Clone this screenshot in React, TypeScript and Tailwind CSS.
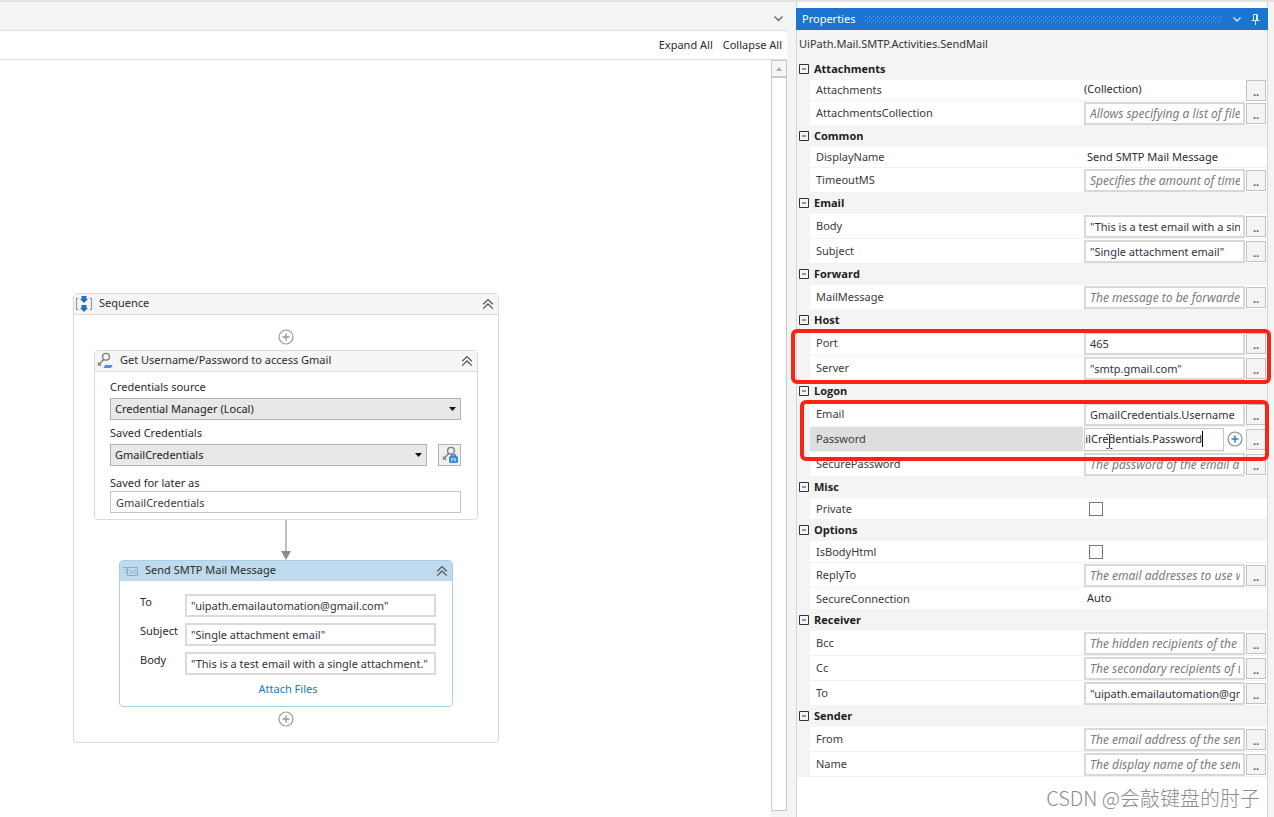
import type { ReactNode } from "react";

type Field =
  | { kind: "collection" | "text" | "option"; name: string; value: string }
  | { kind: "hint" | "expr"; name: string; value: string }
  | { kind: "check"; name: string }
  | { kind: "editing"; name: string; value: string };

type Group = { title: string; frame?: string; fields: Field[] };

const groups: Group[] = [
  {
    title: "Attachments",
    fields: [
      { kind: "collection", name: "Attachments", value: "(Collection)" },
      { kind: "hint", name: "AttachmentsCollection", value: "Allows specifying a list of files to be attached" },
    ],
  },
  {
    title: "Common",
    fields: [
      { kind: "text", name: "DisplayName", value: "Send SMTP Mail Message" },
      { kind: "hint", name: "TimeoutMS", value: "Specifies the amount of time to wait" },
    ],
  },
  {
    title: "Email",
    fields: [
      { kind: "expr", name: "Body", value: '"This is a test email with a single attachment."' },
      { kind: "expr", name: "Subject", value: '"Single attachment email"' },
    ],
  },
  {
    title: "Forward",
    fields: [{ kind: "hint", name: "MailMessage", value: "The message to be forwarded" }],
  },
  {
    title: "Host",
    frame: "-left-1.5 -right-1 top-[19px] -bottom-[3px]",
    fields: [
      { kind: "expr", name: "Port", value: "465" },
      { kind: "expr", name: "Server", value: '"smtp.gmail.com"' },
    ],
  },
  {
    title: "Logon",
    frame: "left-[3px] -right-0.5 top-[19px] bottom-4",
    fields: [
      { kind: "expr", name: "Email", value: "GmailCredentials.Username" },
      { kind: "editing", name: "Password", value: "GmailCredentials.Password" },
      { kind: "hint", name: "SecurePassword", value: "The password of the email account" },
    ],
  },
  { title: "Misc", fields: [{ kind: "check", name: "Private" }] },
  {
    title: "Options",
    fields: [
      { kind: "check", name: "IsBodyHtml" },
      { kind: "hint", name: "ReplyTo", value: "The email addresses to use when replying" },
      { kind: "option", name: "SecureConnection", value: "Auto" },
    ],
  },
  {
    title: "Receiver",
    fields: [
      { kind: "hint", name: "Bcc", value: "The hidden recipients of the email" },
      { kind: "hint", name: "Cc", value: "The secondary recipients of the email" },
      { kind: "expr", name: "To", value: '"uipath.emailautomation@gmail.com"' },
    ],
  },
  {
    title: "Sender",
    fields: [
      { kind: "hint", name: "From", value: "The email address of the sender" },
      { kind: "hint", name: "Name", value: "The display name of the sender" },
    ],
  },
];

function PlusCircle({ blue = false }: { blue?: boolean }) {
  return (
    <svg width="16" height="16" viewBox="0 0 16 16" fill="none" aria-hidden="true">
      <circle cx="8" cy="8" r="7" stroke={blue ? "#7d8a94" : "#999"} strokeWidth="1.2" />
      <path d="M8 4.5v7M4.5 8h7" stroke={blue ? "#2f7fc4" : "#999"} strokeWidth="1.5" />
    </svg>
  );
}

function DoubleChevron() {
  return (
    <svg width="12" height="12" viewBox="0 0 12 12" fill="none" stroke="#555" strokeWidth="1.3" aria-hidden="true">
      <path d="M1.2 6.2 6 1.6l4.8 4.6M1.2 10.6 6 6l4.8 4.6" />
    </svg>
  );
}

function SequenceIcon() {
  return (
    <svg width="18" height="16" viewBox="0 0 18 16" fill="none" aria-hidden="true">
      <path d="M3.5 2.5h-2v11h2M14.5 2.5h2v11h-2" stroke="#9a9a9a" strokeWidth="1.2" />
      <path d="M6.5 0h5v3h1.500L9 7 5 3h1.500zM6.500 9h5v3h1.500L9 16l-4-4h1.500z" fill="#2272c3" />
    </svg>
  );
}

function KeyIcon({ badge }: { badge: "bar" | "lock" }) {
  return (
    <svg width="18" height="18" viewBox="0 0 18 18" fill="none" aria-hidden="true">
      <circle cx="10" cy="4.800" r="3.400" stroke="#808080" strokeWidth="1.400" />
      <path d="M7.600 7.400 2 13.400M2 10.800l3 3" stroke="#808080" strokeWidth="1.500" />
      {badge === "bar" ? (
        <path d="M9 13h7.500l-1.500 3H7.500z" fill="#4a90dc" />
      ) : (
        <>
          <path d="M10.500 10.500V9h4v1.500" stroke="#3f86d4" strokeWidth="1.300" />
          <rect x="8" y="10" width="9" height="7" rx="1.500" fill="#3f86d4" />
          <path d="M10.500 15.500v-3h4v3M10.500 14h4" stroke="#a9cbee" />
        </>
      )}
    </svg>
  );
}

function MailIcon() {
  return (
    <svg width="18" height="12" viewBox="0 0 18 12" fill="none" stroke="#87a9d0" strokeWidth="1" aria-hidden="true">
      <path d="M6.500 2.500h10v8h-10zM8 4.500l3.500 3 3.500-3M8.500 9l1.500-1.500M15 9l-1.500-1.500M2 2.500h4M3.500 5h3M4.500 7.500h2" />
    </svg>
  );
}

function ActivityHeader({ icon, title, selected = false }: { icon: ReactNode; title: string; selected?: boolean }) {
  return (
    <header
      className={
        selected
          ? "flex h-5 items-center bg-[#bfdaed] pr-[3px]"
          : "flex h-[21px] items-center border-b border-[#dcdcdc] bg-[#f5f5f5] pr-[3px]"
      }
    >
      <span className="flex w-[25px] justify-start pl-px">{icon}</span>
      <h2 className="grow truncate pb-0.5">{title}</h2>
      <button type="button" aria-label={`Collapse ${title}`} className="p-px">
        <DoubleChevron />
      </button>
    </header>
  );
}

function SourceSelect({ id, value }: { id: string; value: string }) {
  return (
    <div className="relative grow">
      <select
        id={id}
        className="block h-[22px] w-full appearance-none border border-[#b3b3b3] bg-[#e8e8e8] px-1 leading-4 text-[#222] outline-none"
      >
        <option>{value}</option>
      </select>
      <svg width="7" height="4" viewBox="0 0 7 4" className="pointer-events-none absolute top-[9px] right-[5px]" aria-hidden="true">
        <path d="M0 0h7L3.500 4z" fill="#111" />
      </svg>
    </div>
  );
}

function CredentialsActivity() {
  return (
    <article className="w-full rounded-sm border border-[#d9d9d9] bg-white">
      <ActivityHeader icon={<KeyIcon badge="bar" />} title="Get Username/Password to access Gmail" />
      <div className="flex flex-col pt-[7px] pr-4 pb-1.5 pl-[15px]">
        <label htmlFor="source" className="mb-[3px] leading-4">
          Credentials source
        </label>
        <SourceSelect id="source" value="Credential Manager (Local)" />
        <label htmlFor="saved" className="mt-[5px] mb-[3px] leading-4">
          Saved Credentials
        </label>
        <div className="flex gap-[11px]">
          <SourceSelect id="saved" value="GmailCredentials" />
          <button
            type="button"
            aria-label="Add credentials"
            className="flex h-[22px] w-[23px] items-center justify-center border border-[#b5b5b5] bg-[#efefef]"
          >
            <KeyIcon badge="lock" />
          </button>
        </div>
        <label htmlFor="later" className="mt-[9px] leading-4">
          Saved for later as
        </label>
        <input
          id="later"
          defaultValue="GmailCredentials"
          className="h-[22px] border border-[#c4c4c4] bg-white px-[5px] text-[#3d3d4d] outline-none"
        />
      </div>
    </article>
  );
}

const mailFields = [
  { label: "To", value: '"uipath.emailautomation@gmail.com"' },
  { label: "Subject", value: '"Single attachment email"' },
  { label: "Body", value: '"This is a test email with a single attachment."' },
];

function MailActivity() {
  return (
    <article className="w-full max-w-[334px] rounded-sm border border-[#a9cfe8] bg-white">
      <ActivityHeader icon={<MailIcon />} title="Send SMTP Mail Message" selected />
      <div className="flex flex-col gap-[6px] pt-[13px] pr-4 pb-[9px] pl-5">
        {mailFields.map((f) => (
          <div key={f.label} className="flex">
            <label htmlFor={`mail-${f.label}`} className="w-[45px] leading-4">
              {f.label}
            </label>
            <input
              id={`mail-${f.label}`}
              defaultValue={f.value}
              className="h-[23px] min-w-0 grow border-2 border-[#dadade] bg-white px-1 text-[#33333f] outline-none"
            />
          </div>
        ))}
        <a href="#attach" className="self-center leading-4 text-[#2377bd]">
          Attach Files
        </a>
      </div>
    </article>
  );
}

function Designer() {
  return (
    <div className="flex grow items-start pt-[233px] pr-4 pl-[73px]">
      <section className="w-full max-w-[426px] rounded-sm border border-[#d9d9d9] bg-white">
        <ActivityHeader icon={<SequenceIcon />} title="Sequence" />
        <div className="flex flex-col items-center px-5 pt-[14px] pb-[15px]">
          <button type="button" aria-label="Add activity at start" className="mb-[5px]">
            <PlusCircle />
          </button>
          <CredentialsActivity />
          <svg width="10" height="40" viewBox="0 0 10 40" aria-hidden="true">
            <path d="M5 0v32" stroke="#aaa" strokeWidth="1.500" />
            <path d="M0 31h10L5 40z" fill="#8c8c8c" />
          </svg>
          <MailActivity />
          <button type="button" aria-label="Add activity at end" className="mt-1">
            <PlusCircle />
          </button>
        </div>
      </section>
    </div>
  );
}

function BrowseButton({ name }: { name: string }) {
  return (
    <button
      type="button"
      aria-label={`Browse ${name}`}
      className="flex h-[21px] w-5 shrink-0 items-end justify-center border border-[#c2c2c2] bg-[#f4f4f4] font-bold leading-4 text-[#555]"
    >
      ..
    </button>
  );
}

function FieldEditor({ field, id }: { field: Field; id: string }) {
  switch (field.kind) {
    case "collection":
      return (
        <>
          <input id={id} readOnly defaultValue={field.value} className="min-w-0 grow bg-transparent pb-0.5 outline-none" />
          <BrowseButton name={field.name} />
        </>
      );
    case "text":
      return <input id={id} defaultValue={field.value} className="min-w-0 grow bg-transparent pl-[3px] outline-none" />;
    case "option":
      return (
        <select id={id} className="min-w-0 grow appearance-none bg-transparent pl-[3px] outline-none">
          <option>{field.value}</option>
        </select>
      );
    case "check":
      return <input id={id} type="checkbox" className="ml-[5px] size-[14px] appearance-none border border-[#777] bg-white" />;
    case "editing":
      return (
        <>
          <div className="relative flex h-[23px] min-w-0 grow items-center justify-end overflow-hidden border border-[#c4c4c4] bg-white">
            <input id={id} defaultValue={field.value} className="w-44 shrink-0 bg-transparent text-right outline-none" />
            <span className="mr-5 h-4 w-px shrink-0 bg-black" />
            <svg width="7" height="15" viewBox="0 0 7 15" className="absolute top-[5px] left-[21px]" fill="none" stroke="#333" aria-hidden="true">
              <path d="M0.500 0.500h2l1 1 1-1h2M3.500 1.500v12M0.500 14.500h2l1-1 1 1h2" />
            </svg>
          </div>
          <button type="button" aria-label="Create variable" className="flex w-5 shrink-0 justify-center">
            <PlusCircle blue />
          </button>
          <BrowseButton name={field.name} />
        </>
      );
    case "expr":
      return (
        <>
          <input
            id={id}
            defaultValue={field.value}
            className="h-[23px] min-w-0 grow border-2 border-[#d8d8d8] bg-white pr-[3px] pl-1 text-[#33333f] outline-none"
          />
          <BrowseButton name={field.name} />
        </>
      );
    case "hint":
      return (
        <>
          <input
            id={id}
            placeholder={field.value}
            className="h-[23px] min-w-0 grow border-2 border-[#d8d8d8] bg-white pr-[3px] pl-1 text-[12px] italic outline-none placeholder:text-[#7a7a7a]"
          />
          <BrowseButton name={field.name} />
        </>
      );
  }
}

const rowHeight: Record<Field["kind"], string> = {
  collection: "h-[21px]",
  text: "h-[21px]",
  option: "h-[22px]",
  check: "h-[22px]",
  editing: "h-[25px]",
  expr: "h-[25px]",
  hint: "h-[25px]",
};

function PropertyGroup({ group }: { group: Group }) {
  return (
    <section className="relative bg-[#f4f4f4]">
      <h3 className="flex h-[21px] items-center gap-[5px] pl-0.5 font-['Open_Sans',sans-serif] font-bold text-[#1c1c1c]">
        <button type="button" aria-label={`Collapse ${group.title}`} className="pb-0.5">
          <svg width="10" height="10" viewBox="0 0 10 10" fill="none" stroke="#333" aria-hidden="true">
            <path d="M0.500 0.500h9v9h-9zM3 5h4" />
          </svg>
        </button>
        {group.title}
      </h3>
      <div className="pl-[13px]">
        {group.fields.map((field) => {
          const id = `${group.title}-${field.name}`;
          return (
            <div key={id} className={`flex border-b border-[#f2f2f2] bg-white ${rowHeight[field.kind]}`}>
              <label
                htmlFor={id}
                className={`flex min-w-0 flex-1 items-center pt-px pl-1.5 text-[#3a3a3a] ${field.kind === "editing" ? "bg-[#dedede]" : ""}`}
              >
                {field.name}
              </label>
              <div className="ml-px flex w-[183px] shrink-0 items-center gap-px pr-px">
                <FieldEditor field={field} id={id} />
              </div>
            </div>
          );
        })}
      </div>
      {group.frame && (
        <div className={`pointer-events-none absolute z-10 rounded-md border-4 border-[#fb2412] ${group.frame}`} />
      )}
    </section>
  );
}

function PropertiesPanel() {
  return (
    <aside className="mr-[6px] flex w-[472px] shrink-0 flex-col border-x border-[#d4d4d4] bg-white">
      <header className="-mx-px mt-[6px] flex h-[22px] items-center gap-[10px] bg-[#1a74d0] pr-2 pl-[6px] text-white">
        <h2>Properties</h2>
        <svg className="h-[7px] min-w-0 grow" aria-hidden="true">
          <defs>
            <pattern id="grip" width="4" height="4" patternUnits="userSpaceOnUse">
              <path d="M0 0h1v1H0zM2 2h1v1H2z" fill="#5fa3e6" />
            </pattern>
          </defs>
          <rect width="100%" height="7" fill="url(#grip)" />
        </svg>
        <button type="button" aria-label="Panel menu">
          <svg width="8" height="5" viewBox="0 0 8 5" fill="none" stroke="#d8eaff" strokeWidth="1.400" aria-hidden="true">
            <path d="M0.500 0.500 4 4l3.500-3.500" />
          </svg>
        </button>
        <button type="button" aria-label="Pin panel">
          <svg width="9" height="11" viewBox="0 0 9 11" fill="none" stroke="#d8eaff" aria-hidden="true">
            <path d="M2.500 6.500v-6h4v6M5.500 0.500v6M0.500 6.500h8M4.500 6.500V11" />
          </svg>
        </button>
      </header>
      <p className="h-[29px] bg-[#f4f4f4] pt-[6px] pl-0.5 leading-4 text-[#333]">UiPath.Mail.SMTP.Activities.SendMail</p>
      {groups.map((g) => (
        <PropertyGroup key={g.title} group={g} />
      ))}
    </aside>
  );
}

export default function App() {
  return (
    <div className="relative flex min-h-screen border-t-2 border-[#e2e2e2] bg-[#f4f4f4] font-['Noto_Sans','Open_Sans',sans-serif] text-[11px] text-[#2b2b2b]">
      <main className="mr-[9px] flex min-w-0 flex-1 flex-col">
        <div className="flex h-7 items-center justify-end pt-[6px] pr-[4px]">
          <button type="button" aria-label="Open documents">
            <svg width="9" height="6" viewBox="0 0 9 6" fill="none" stroke="#666" strokeWidth="1.300" aria-hidden="true">
              <path d="M0.500 0.500l4 4 4-4" />
            </svg>
          </button>
        </div>
        <div className="flex h-[30px] items-center justify-end gap-[10px] border-y border-[#dedede] bg-white pt-px pr-[5px]">
          <button type="button">Expand All</button>
          <button type="button">Collapse All</button>
        </div>
        <div className="flex grow bg-white">
          <Designer />
          <div className="flex w-4 shrink-0 flex-col bg-[#f4f4f4] pb-[6px]">
            <button
              type="button"
              aria-label="Scroll up"
              className="flex h-[17px] items-center justify-center border border-[#c9c9c9] bg-[#f6f6f6]"
            >
              <svg width="6" height="4" viewBox="0 0 6 4" aria-hidden="true">
                <path d="M0 4h6L3 0z" fill="#aaa" />
              </svg>
            </button>
            <div className="grow border border-[#c9c9c9] bg-white" />
          </div>
        </div>
      </main>
      <PropertiesPanel />
      <p className="absolute right-[14px] bottom-[4px] font-['Noto_Sans_CJK_SC',sans-serif] text-[20px] leading-[30px] font-light text-[#8d8d8d]">
        CSDN @会敲键盘的肘子
      </p>
    </div>
  );
}
